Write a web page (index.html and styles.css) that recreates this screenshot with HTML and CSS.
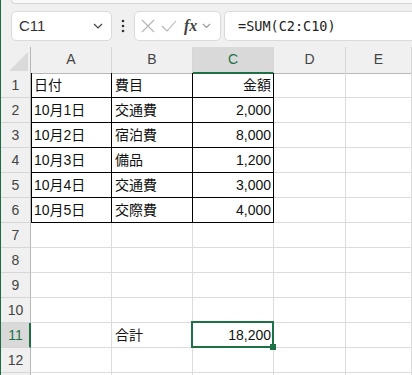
FILE: index.html
```html
<!DOCTYPE html>
<html lang="ja">
<head>
    <meta charset="UTF-8">
    <meta name="viewport" content="width=device-width, initial-scale=1.0">
    <title>Sheet1 - Excel</title>
    <link rel="stylesheet" href="styles.css">
</head>
<body>
    <div class="ribbon-edge"></div>

    <!-- formula bar -->
    <div class="formula-bar">
        <div class="name-box">
            <span>C11</span>
            <svg class="chevron" width="10" height="6" viewBox="0 0 10 6"><path d="M1 1l4 4 4-4" fill="none" stroke="#444" stroke-width="1.2"/></svg>
        </div>
        <div class="bar-dots">
            <svg width="4" height="14" viewBox="0 0 4 14"><circle cx="2" cy="2" r="1.3" fill="#333"/><circle cx="2" cy="7" r="1.3" fill="#333"/><circle cx="2" cy="12" r="1.3" fill="#333"/></svg>
        </div>
        <div class="fx-box">
            <svg width="14" height="14" viewBox="0 0 14 14"><path d="M1 1l12 12M13 1L1 13" stroke="#b4b4b4" stroke-width="1.1"/></svg>
            <svg width="16" height="14" viewBox="0 0 16 14"><path d="M1 7l5 5L15 2" fill="none" stroke="#b4b4b4" stroke-width="1.1"/></svg>
            <span class="fx">fx</span>
            <svg class="chevron small" width="9" height="6" viewBox="0 0 9 6"><path d="M1 1l3.5 3.5L8 1" fill="none" stroke="#999" stroke-width="1.1"/></svg>
        </div>
        <div class="formula-input">=SUM(C2:C10)</div>
    </div>

    <!-- sheet -->
    <div class="sheet">
        <div class="row head">
            <div class="corner">
                <svg width="20" height="19" viewBox="0 0 20 19"><path d="M0 19L19 0v19z" fill="#dadada"/></svg>
            </div>
            <div class="col-h">A</div>
            <div class="col-h">B</div>
            <div class="col-h active">C</div>
            <div class="col-h">D</div>
            <div class="col-h">E</div>
        </div>

        <div class="row">
            <div class="row-h">1</div>
            <div class="cell box first">日付</div>
            <div class="cell box">費目</div>
            <div class="cell box num">金額</div>
            <div class="cell"></div>
            <div class="cell"></div>
        </div>
        <div class="row">
            <div class="row-h">2</div>
            <div class="cell box first">10月1日</div>
            <div class="cell box">交通費</div>
            <div class="cell box num">2,000</div>
            <div class="cell"></div>
            <div class="cell"></div>
        </div>
        <div class="row">
            <div class="row-h">3</div>
            <div class="cell box first">10月2日</div>
            <div class="cell box">宿泊費</div>
            <div class="cell box num">8,000</div>
            <div class="cell"></div>
            <div class="cell"></div>
        </div>
        <div class="row">
            <div class="row-h">4</div>
            <div class="cell box first">10月3日</div>
            <div class="cell box">備品</div>
            <div class="cell box num">1,200</div>
            <div class="cell"></div>
            <div class="cell"></div>
        </div>
        <div class="row">
            <div class="row-h">5</div>
            <div class="cell box first">10月4日</div>
            <div class="cell box">交通費</div>
            <div class="cell box num">3,000</div>
            <div class="cell"></div>
            <div class="cell"></div>
        </div>
        <div class="row">
            <div class="row-h">6</div>
            <div class="cell box first">10月5日</div>
            <div class="cell box">交際費</div>
            <div class="cell box num">4,000</div>
            <div class="cell"></div>
            <div class="cell"></div>
        </div>
        <div class="row">
            <div class="row-h">7</div>
            <div class="cell"></div><div class="cell"></div><div class="cell"></div><div class="cell"></div><div class="cell"></div>
        </div>
        <div class="row">
            <div class="row-h">8</div>
            <div class="cell"></div><div class="cell"></div><div class="cell"></div><div class="cell"></div><div class="cell"></div>
        </div>
        <div class="row">
            <div class="row-h">9</div>
            <div class="cell"></div><div class="cell"></div><div class="cell"></div><div class="cell"></div><div class="cell"></div>
        </div>
        <div class="row">
            <div class="row-h">10</div>
            <div class="cell"></div><div class="cell"></div><div class="cell"></div><div class="cell"></div><div class="cell"></div>
        </div>
        <div class="row">
            <div class="row-h active">11</div>
            <div class="cell"></div>
            <div class="cell">合計</div>
            <div class="cell num selected">18,200</div>
            <div class="cell"></div>
            <div class="cell"></div>
        </div>
        <div class="row">
            <div class="row-h">12</div>
            <div class="cell"></div><div class="cell"></div><div class="cell"></div><div class="cell"></div><div class="cell"></div>
        </div>
        <div class="row">
            <div class="row-h"></div>
            <div class="cell"></div><div class="cell"></div><div class="cell"></div><div class="cell"></div><div class="cell"></div>
        </div>
    </div>
</body>
</html>
```

FILE: styles.css
```css
/* General */
* {
    box-sizing: border-box;
}

body {
    margin: 0;
    height: 375px;
    overflow: hidden;
    background: #f0f0f0;
    border-left: 1px solid #1d6b40;
    font-family: 'Liberation Sans', 'Noto Sans CJK JP', sans-serif;
    color: #222;
}

.ribbon-edge {
    height: 4px;
    margin-left: 10px;
    background: #f9f9f9;
    border: 1px solid #d6d6d6;
    border-top: none;
    border-right: none;
    border-bottom-left-radius: 6px;
}

/* Formula bar */
.formula-bar {
    display: flex;
    align-items: center;
    height: 43px;
    padding: 0 0 0 10px;
}

.name-box,
.fx-box,
.formula-input {
    height: 30px;
    background: #fff;
    border: 1px solid #dadada;
    border-radius: 5px;
    display: flex;
    align-items: center;
}

.name-box {
    width: 101px;
    padding: 0 8px 0 7px;
    justify-content: space-between;
    font-size: 15px;
    color: #333;
}

.bar-dots {
    width: 22px;
    display: flex;
    justify-content: center;
    padding-top: 1px;
}

.fx-box {
    width: 87px;
    padding: 0 0 0 6px;
    gap: 6px;
}

.fx {
    font-family: 'Liberation Serif', serif;
    font-style: italic;
    font-weight: bold;
    font-size: 16px;
    color: #444;
    margin-left: 1px;
}

.chevron.small {
    margin-left: -1px;
}

.formula-input {
    flex: 1;
    margin-left: 3px;
    padding-left: 13px;
    border-right: none;
    border-radius: 5px 0 0 5px;
    font-family: 'DejaVu Sans Mono', monospace;
    font-size: 13.5px;
    color: #222;
}

/* Sheet grid */
.sheet {
    background: #fff;
}

.row {
    display: grid;
    grid-template-columns: 30px 81px 81px 81px 72px 1fr;
    height: 25px;
}

.row.head {
    height: 26px;
    background: #f0f0f0;
}

.corner {
    border-right: 1px solid #b8b8b8;
    border-bottom: 1px solid #b8b8b8;
    display: flex;
    align-items: flex-end;
    justify-content: flex-end;
    padding: 0 1px 2px 0;
}

.col-h {
    border-right: 1px solid #d6d6d6;
    border-bottom: 1px solid #b8b8b8;
    text-align: center;
    line-height: 25px;
    font-size: 14px;
    color: #444;
}

.col-h.active {
    background: #d9d9d9;
    border-bottom: 2px solid #1e7145;
    color: #1e7145;
}

.row-h {
    background: #f0f0f0;
    border-right: 1px solid #b8b8b8;
    border-bottom: 1px solid #d6d6d6;
    text-align: center;
    line-height: 24px;
    font-size: 14px;
    color: #444;
}

.row-h.active {
    background: #d9d9d9;
    border-right: 2px solid #1e7145;
    color: #1e7145;
    padding-left: 1px;
}

.cell {
    position: relative;
    border-right: 1px solid #dcdcdc;
    border-bottom: 1px solid #dcdcdc;
    padding: 0 3px;
    line-height: 24px;
    font-size: 14px;
    color: #111;
    white-space: nowrap;
}

.cell.box {
    border-color: #000;
}

.cell.first {
    border-left: 1px solid #000;
    padding-left: 2px;
}

.cell.num {
    text-align: right;
    padding-right: 2px;
}

/* Active cell */
.cell.selected::after {
    content: '';
    position: absolute;
    top: -2px;
    left: -2px;
    right: -1px;
    bottom: -1px;
    border: 2px solid #1e7145;
}

.cell.selected::before {
    content: '';
    position: absolute;
    right: -3px;
    bottom: -3px;
    width: 6px;
    height: 6px;
    background: #1e7145;
    z-index: 1;
}
```
